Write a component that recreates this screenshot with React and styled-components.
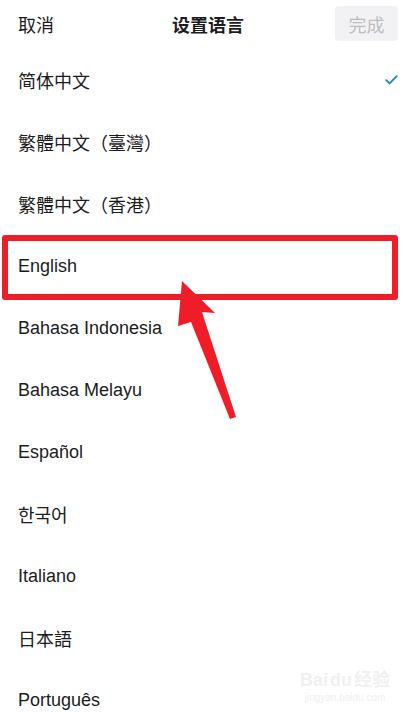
import React from 'react';
import styled, { createGlobalStyle } from 'styled-components';

const GlobalStyle = createGlobalStyle`
  html, body {
    margin: 0;
    padding: 0;
    background: #fff;
  }
  body {
    font-family: "Liberation Sans", "Noto Sans CJK SC", "Noto Sans CJK KR", sans-serif;
    color: #1c1c1e;
  }
`;

const LANGUAGES = [
  { label: '简体中文', selected: true },
  { label: '繁體中文（臺灣）' },
  { label: '繁體中文（香港）' },
  { label: 'English', highlighted: true },
  { label: 'Bahasa Indonesia' },
  { label: 'Bahasa Melayu' },
  { label: 'Español' },
  { label: '한국어' },
  { label: 'Italiano' },
  { label: '日本語' },
  { label: 'Português' },
];

const Page = styled.div`
  position: relative;
  width: 416px;
  height: 715px;
  overflow: hidden;
  background: #fff;
`;

const Header = styled.header`
  display: grid;
  grid-template-columns: 1fr auto 1fr;
  align-items: center;
  height: 47px;
  padding: 0 18px 2px;
  font-size: 18px;
`;

const Cancel = styled.span`
  justify-self: start;
  color: #1c1c1e;
`;

const Title = styled.h1`
  margin: 0;
  font-size: 18px;
  font-weight: 700;
  color: #1c1c1e;
`;

const DoneButton = styled.button`
  justify-self: end;
  width: 63px;
  height: 35px;
  border: 0;
  border-radius: 4px;
  background: #f2f2f4;
  color: #bdbdc0;
  font: inherit;
  font-size: 18px;
  padding: 0;
`;

const List = styled.ul`
  list-style: none;
  margin: 0;
  padding: 0;
`;

const Row = styled.li`
  position: relative;
  display: flex;
  align-items: center;
  justify-content: space-between;
  height: 62px;
  padding: 0 18px;
  font-size: 18px;

  ${props =>
    props.highlighted &&
    `
    &::after {
      content: '';
      position: absolute;
      left: 2px;
      top: 0;
      width: 396px;
      height: 65px;
      box-sizing: border-box;
      border: 6px solid #ee1d27;
      border-radius: 3px;
    }
  `}
`;

const Check = () => (
  <svg width="13" height="10" viewBox="0 0 13 10">
    <path
      d="M1.2 5.2 L4.6 8.4 L11.8 1.2"
      fill="none"
      stroke="#1a7cf2"
      strokeWidth="1.8"
      strokeLinecap="round"
      strokeLinejoin="round"
    />
  </svg>
);

const Annotation = styled.svg`
  position: absolute;
  left: 0;
  top: 0;
  pointer-events: none;
`;

const Watermark = styled.div`
  position: absolute;
  right: 26px;
  bottom: 12px;
  display: flex;
  flex-direction: column;
  align-items: center;
  color: #f0f0f0;
  font-family: "Liberation Sans", "Noto Sans CJK SC", sans-serif;
  pointer-events: none;
`;

const MarkTop = styled.div`
  display: flex;
  align-items: flex-end;
  gap: 2px;
  font-size: 18px;
  font-weight: 700;
  line-height: 1;
`;

const MarkUrl = styled.div`
  font-size: 10px;
  margin-top: 3px;
`;

const App = () => (
  <Page>
    <GlobalStyle />
    <Header>
      <Cancel>取消</Cancel>
      <Title>设置语言</Title>
      <DoneButton type="button">完成</DoneButton>
    </Header>
    <List>
      {LANGUAGES.map(lang => (
        <Row key={lang.label} highlighted={lang.highlighted}>
          <span>{lang.label}</span>
          {lang.selected && <Check />}
        </Row>
      ))}
    </List>
    <Annotation width="416" height="715" viewBox="0 0 416 715">
      <polygon
        points="182,281 215,313 202,312 236,417 230,419 191,322 178,326"
        fill="#ee1d27"
      />
    </Annotation>
    <Watermark>
      <MarkTop>
        <span>Bai</span>
        <span>du</span>
        <span>经验</span>
      </MarkTop>
      <MarkUrl>jingyan.baidu.com</MarkUrl>
    </Watermark>
  </Page>
);

export default App;
